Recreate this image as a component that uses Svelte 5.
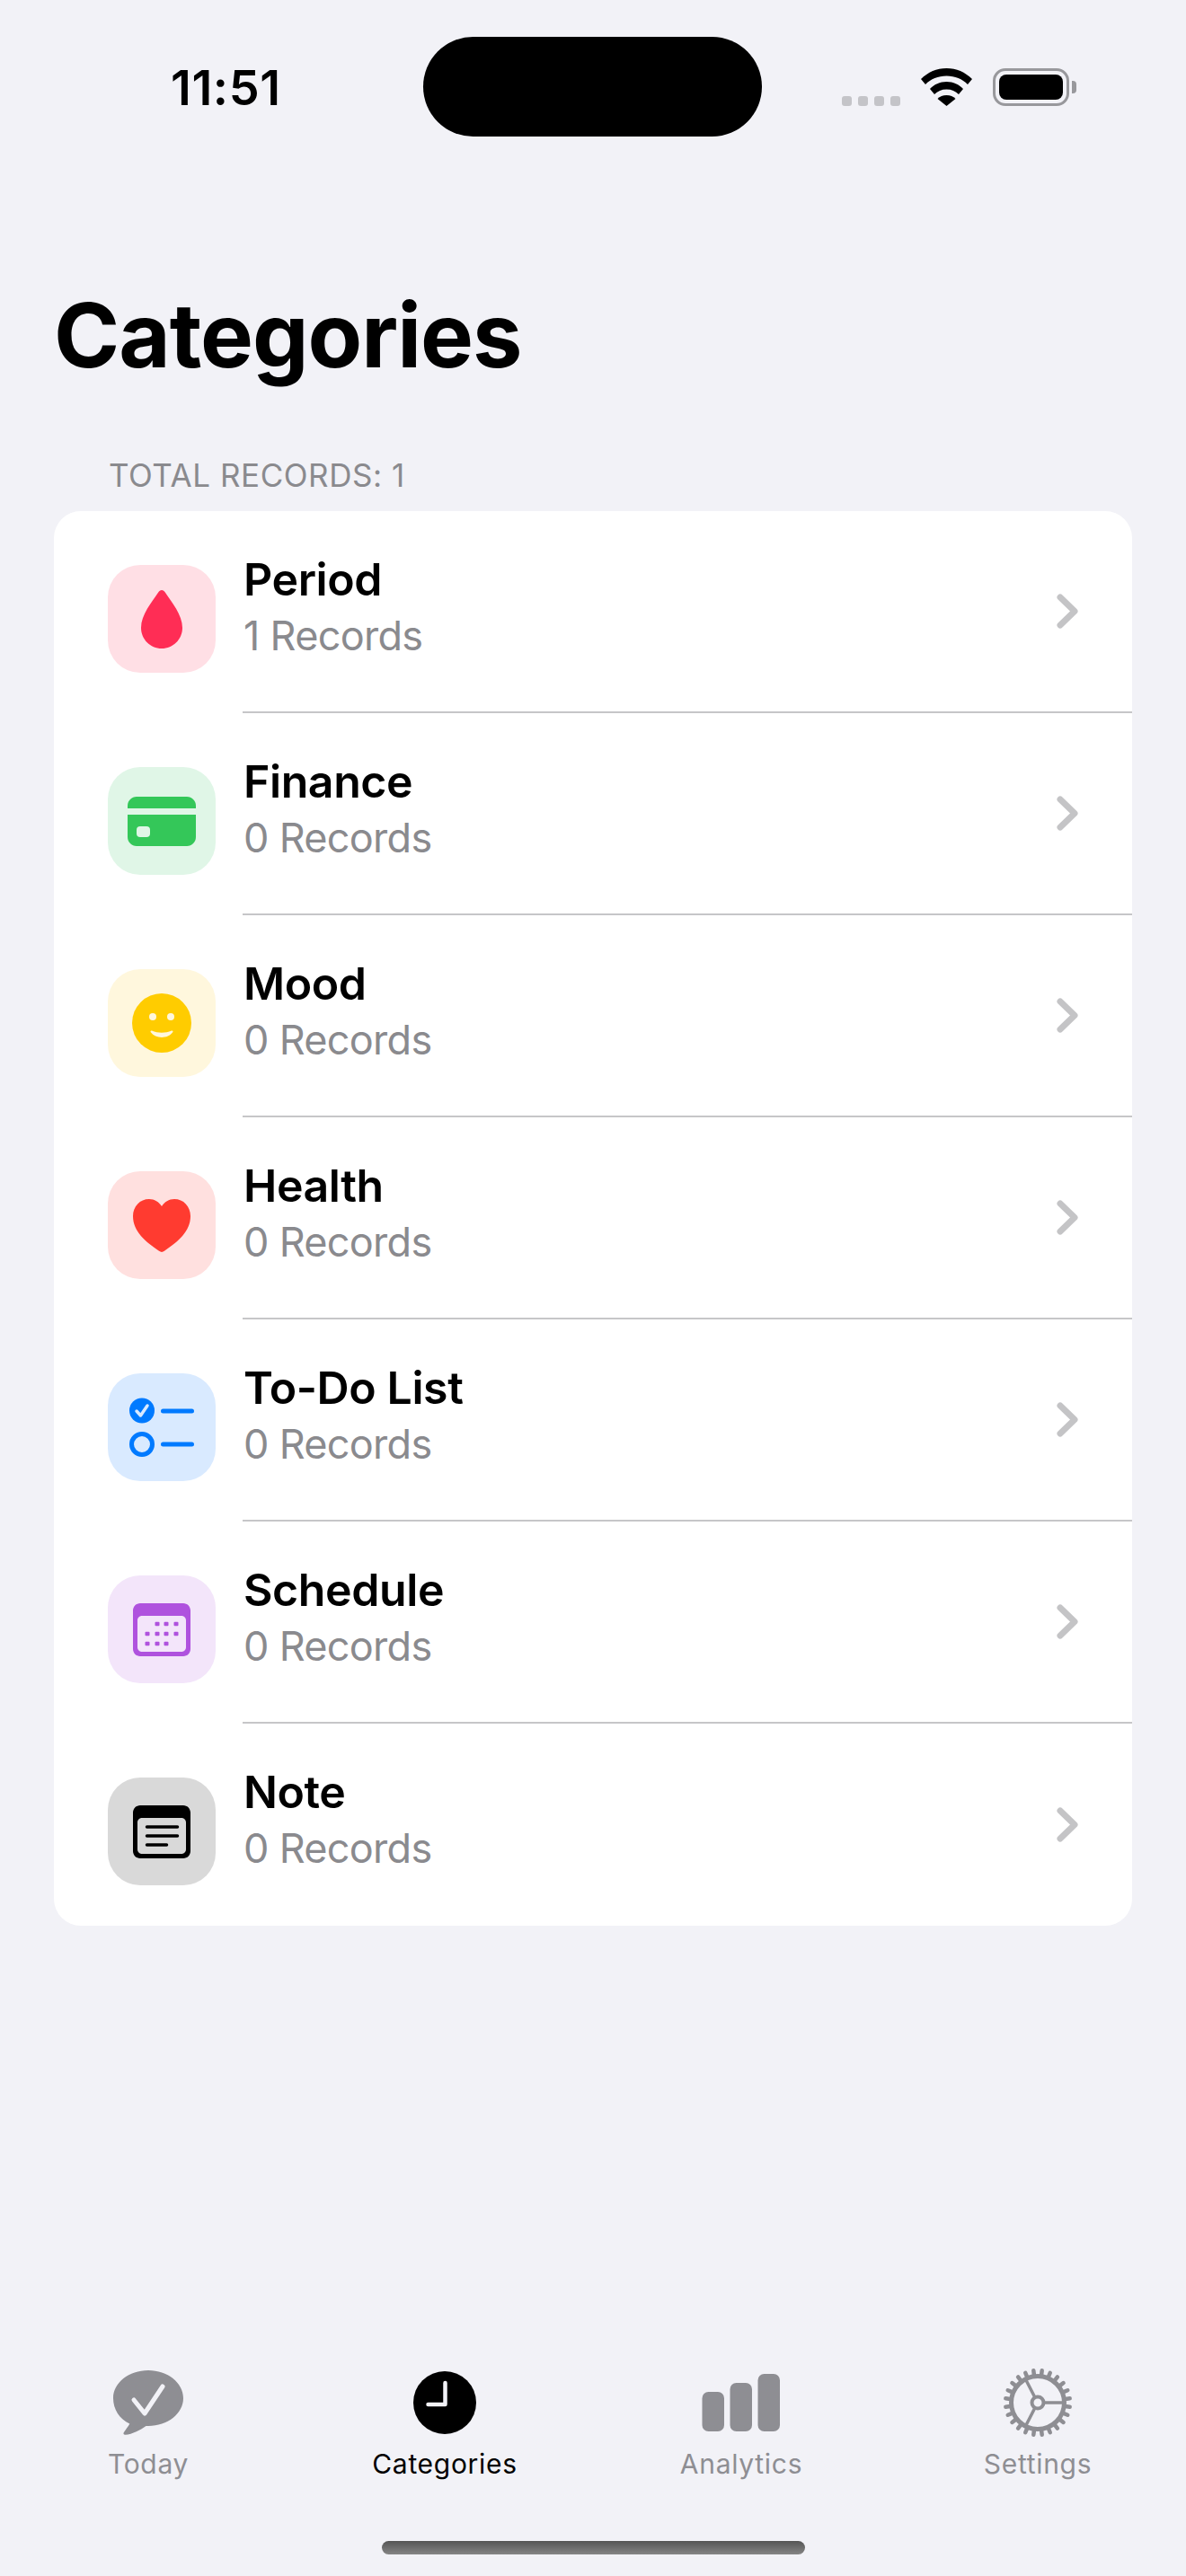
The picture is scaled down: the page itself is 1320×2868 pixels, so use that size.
<script>
  const categories = [
    { id: 'period', name: 'Period', count: 1 },
    { id: 'finance', name: 'Finance', count: 0 },
    { id: 'mood', name: 'Mood', count: 0 },
    { id: 'health', name: 'Health', count: 0 },
    { id: 'todo', name: 'To-Do List', count: 0 },
    { id: 'schedule', name: 'Schedule', count: 0 },
    { id: 'note', name: 'Note', count: 0 }
  ];

  const tabs = [
    { id: 'today', label: 'Today' },
    { id: 'categories', label: 'Categories', active: true },
    { id: 'analytics', label: 'Analytics' },
    { id: 'settings', label: 'Settings' }
  ];

  const calendarDots = [
    [55, 54], [65, 54], [76, 54],
    [44, 65], [55, 65], [65, 65], [76, 65],
    [44, 76], [55, 76], [65, 76]
  ];

  // gear teeth, 24 round the rim
  const teeth = Array.from({ length: 24 }, (_, i) => {
    const a = ((i + 0.5) * Math.PI) / 12;
    return {
      x1: 40 + Math.cos(a) * 31,
      y1: 40 + Math.sin(a) * 31,
      x2: 40 + Math.cos(a) * 36,
      y2: 40 + Math.sin(a) * 36
    };
  });
</script>

{#snippet tileIcon(id)}
  <svg viewBox="0 0 120 120" width="120" height="120">
    {#if id === 'period'}
      <path fill="#ff2d55" d="M60 28c1.600 0 2.800.9 3.800 2.400C71 41.500 83 55 83 70c0 12.700-10.300 23-23 23S37 82.700 37 70c0-15 12-28.500 19.200-39.600C57.200 28.900 58.400 28 60 28Z" />
    {:else if id === 'finance'}
      <path fill="#34c759" d="M22 46v-3c0-5.500 4.500-10 10-10h56c5.500 0 10 4.500 10 10v3Z" />
      <path fill="#34c759" d="M22 53h76v25c0 5.500-4.500 10-10 10H32c-5.500 0-10-4.500-10-10Z" />
      <rect x="32" y="66" width="15" height="12" rx="4" fill="#e0f6e7" />
    {:else if id === 'mood'}
      <circle cx="60" cy="60" r="33" fill="#ffcc00" />
      <circle cx="50" cy="53" r="4" fill="#fff7dd" />
      <circle cx="70" cy="53" r="4" fill="#fff7dd" />
      <path fill="#fff7dd" d="M49 68.500c7 3 15 3 22 0 1.300-.5 2 .8 1.200 1.800C69.500 74 65 76 60 76s-9.500-2-12.200-5.700c-.8-1 0-2.300 1.200-1.800Z" />
    {:else if id === 'health'}
      <path fill="#ff3b30" d="M60 90c-1 0-2-.5-3-1.200C42 78.500 28 67 28 50c0-11 7.800-19 18-19 6 0 10.800 3 14 8 3.200-5 8-8 14-8 10.200 0 18 8 18 19 0 17-14 28.500-29 38.800-1 .7-2 1.200-3 1.200Z" />
    {:else if id === 'todo'}
      <circle cx="38" cy="41.500" r="14" fill="#007aff" />
      <path fill="none" stroke="#d9eaff" stroke-width="3.500" stroke-linecap="round" stroke-linejoin="round" d="M32 42l4.500 5L44 36" />
      <circle cx="38" cy="79" r="11.500" fill="none" stroke="#007aff" stroke-width="5" />
      <path stroke="#007aff" stroke-width="5" stroke-linecap="round" d="M61.500 42h32M61.500 79h32" />
    {:else if id === 'schedule'}
      <path fill="#af52de" fill-rule="evenodd" d="M36 31h48c4.400 0 8 3.600 8 8v43c0 4.400-3.600 8-8 8H36c-4.400 0-8-3.600-8-8V39c0-4.400 3.600-8 8-8Zm2 14c-2.800 0-5 2.200-5 5v30c0 2.800 2.200 5 5 5h44c2.800 0 5-2.200 5-5V50c0-2.800-2.200-5-5-5Z" />
      {#each calendarDots as [x, y]}
        <rect x={x - 2.500} y={y - 2.200} width="5" height="4.400" rx="1" fill="#af52de" />
      {/each}
    {:else}
      <path fill="#000" fill-rule="evenodd" d="M36 31h48c4.400 0 8 3.600 8 8v43c0 4.400-3.600 8-8 8H36c-4.400 0-8-3.600-8-8V39c0-4.400 3.600-8 8-8Zm2 14c-2.800 0-5 2.200-5 5v30c0 2.800 2.200 5 5 5h44c2.800 0 5-2.200 5-5V50c0-2.800-2.200-5-5-5Z" />
      <path stroke="#000" stroke-width="3.500" stroke-linecap="round" d="M43.500 55h34M43.500 65h34M43.500 75h22" />
    {/if}
  </svg>
{/snippet}

{#snippet tabIcon(id)}
  {#if id === 'today'}
    <svg viewBox="0 0 80 74" width="80" height="74">
      <path fill="#8e8e93" d="M40 1c21.500 0 39 13.800 39 31S61.500 63 40 63h-2.500C32 67 22 72.500 14.500 72.800c-2 .1-2.600-1.400-1.600-2.800 2-2.700 4.600-6.300 6.400-9.400C8 55.200 1 44.500 1 32 1 14.800 18.500 1 40 1Z" />
      <path fill="none" stroke="#f2f2f7" stroke-width="5" stroke-linecap="round" stroke-linejoin="round" d="M24 34l12 15L56 19" />
    </svg>
  {:else if id === 'categories'}
    <svg viewBox="0 0 72 72" width="72" height="72">
      <circle cx="36" cy="36" r="35" fill="#000" />
      <path fill="none" stroke="#f2f2f7" stroke-width="4.500" stroke-linecap="round" stroke-linejoin="round" d="M36.500 14v24H17.500" />
    </svg>
  {:else if id === 'analytics'}
    <svg viewBox="0 0 88 64" width="88" height="64">
      <rect x="0.500" y="20" width="24.500" height="44" rx="7" fill="#8e8e93" />
      <rect x="31.500" y="10" width="24.500" height="54" rx="7" fill="#8e8e93" />
      <rect x="62.500" y="0" width="24.500" height="64" rx="7" fill="#8e8e93" />
    </svg>
  {:else}
    <svg viewBox="0 0 80 80" width="80" height="80" fill="none" stroke="#8e8e93">
      {#each teeth as t}
        <line x1={t.x1} y1={t.y1} x2={t.x2} y2={t.y2} stroke-width="4.500" stroke-linecap="round" />
      {/each}
      <circle cx="40" cy="40" r="29.500" stroke-width="5" />
      <circle cx="40" cy="40" r="6.500" stroke-width="4" />
      <path stroke-width="3.500" d="M47 40h22M36.500 33.500L26 13M36.500 46.500L26 67" />
    </svg>
  {/if}
{/snippet}

<div class="screen">
  <header class="status">
    <span class="time">11:51</span>
    <div class="island"></div>
    <div class="indicators">
      <div class="signal">
        <i></i><i></i><i></i><i></i>
      </div>
      <svg class="wifi" viewBox="0 0 57 42" width="57" height="42">
        <path d="M28.500 0C17.500 0 7.800 4.300 0 12l5 6C11 12 19 8.500 28.500 8.500S46 12 52 18l5-6C49.200 4.300 39.500 0 28.500 0Z" />
        <path d="M28.500 15C21 15 14.500 18 10 23l5 6c3.500-3.500 8-5.500 13.500-5.500S38.500 25.500 42 29l5-6c-4.500-5-11-8-18.500-8Z" />
        <path d="M28.500 30c-4.200 0-7.500 1.500-10 4l10 8 10-8c-2.500-2.500-5.800-4-10-4Z" />
      </svg>
      <div class="battery">
        <div class="battery-body"><div class="battery-fill"></div></div>
        <div class="battery-nub"></div>
      </div>
    </div>
  </header>

  <main class="content">
    <h1>Categories</h1>
    <div class="section-label">TOTAL RECORDS: 1</div>
    <ul class="list">
      {#each categories as c}
        <li class="row">
          <div class={`tile ${c.id}`}>
            {@render tileIcon(c.id)}
          </div>
          <div class="row-main">
            <div class="row-text">
              <div class="row-title">{c.name}</div>
              <div class="row-sub">{c.count} Records</div>
            </div>
            <svg class="chevron" viewBox="0 0 24 40" width="24" height="40">
              <path d="M4 4l16 15.500L4 35" />
            </svg>
          </div>
        </li>
      {/each}
    </ul>
  </main>

  <nav class="tabbar">
    {#each tabs as t}
      <div class="tab" class:active={t.active}>
        <div class="tab-icon">{@render tabIcon(t.id)}</div>
        <span>{t.label}</span>
      </div>
    {/each}
  </nav>
  <div class="home-wrap"><div class="home-bar"></div></div>
</div>

<style>
  :global(body) {
    margin: 0;
    background: #f2f2f7;
  }

  .screen {
    width: 1320px;
    height: 2868px;
    display: flex;
    flex-direction: column;
    background: #f2f2f7;
    font-family: Inter, "Liberation Sans", sans-serif;
    color: #000;
    overflow: hidden;
  }

  .status {
    display: grid;
    grid-template-columns: 471px 377px 1fr;
    align-items: center;
    height: 111px;
    margin-top: 41px;
  }

  .time {
    padding-left: 190px;
    font-size: 54px;
    font-weight: 600;
    letter-spacing: 0.6px;
    line-height: 1;
    position: relative;
    top: 1px;
  }

  .island {
    height: 111px;
    border-radius: 56px;
    background: #000;
  }

  .indicators {
    display: flex;
    align-items: flex-end;
    height: 42px;
    padding-left: 89px;
  }

  .signal {
    display: flex;
    gap: 7px;
    margin-right: 23px;
  }

  .signal i {
    width: 11px;
    height: 11px;
    border-radius: 3px;
    background: #c4c4c8;
  }

  .wifi {
    fill: #000;
    margin-right: 23px;
  }

  .battery {
    display: flex;
    align-items: center;
    height: 42px;
    gap: 3px;
  }

  .battery-body {
    box-sizing: border-box;
    width: 85px;
    height: 42px;
    padding: 4px;
    border: 3px solid #98989c;
    border-radius: 14px;
  }

  .battery-fill {
    width: 100%;
    height: 100%;
    border-radius: 8px;
    background: #000;
  }

  .battery-nub {
    width: 5px;
    height: 14px;
    border-radius: 0 4px 4px 0;
    background: #98989c;
  }

  .content {
    padding: 0 60px;
    flex: 1;
  }

  h1 {
    margin: 164px 0 0;
    font-size: 99px;
    font-weight: 700;
    line-height: 114px;
    letter-spacing: -1px;
  }

  .section-label {
    margin: 77px 0 0 61px;
    font-size: 35px;
    line-height: 44px;
    color: #8a8a8e;
    letter-spacing: 0.55px;
  }

  .list {
    list-style: none;
    margin: 18px 0 0;
    padding: 0;
    background: #fff;
    border-radius: 30px;
  }

  .row {
    display: flex;
    height: 225px;
    padding-left: 60px;
  }

  .tile {
    flex: none;
    width: 120px;
    height: 120px;
    margin-top: 60px;
    border-radius: 36px;
  }

  .tile svg {
    display: block;
  }

  .tile.period { background: #ffdfe5; }
  .tile.finance { background: #e0f6e7; }
  .tile.mood { background: #fff7dd; }
  .tile.health { background: #ffe0df; }
  .tile.todo { background: #d9eaff; }
  .tile.schedule { background: #f3e5fa; }
  .tile.note { background: #d9d9d9; }

  .row-main {
    flex: 1;
    display: flex;
    align-items: center;
    justify-content: space-between;
    margin-left: 30px;
    padding-right: 60px;
    border-bottom: 2px solid #c6c6c8;
  }

  .row:last-child .row-main {
    border-bottom: 0;
  }

  .row-text {
    margin-left: 1px;
    align-self: flex-start;
    padding-top: 45px;
  }

  .row-title {
    font-size: 50px;
    font-weight: 600;
    line-height: 62px;
    letter-spacing: -0.4px;
  }

  .row-sub {
    font-size: 45px;
    line-height: 62px;
    margin-top: 1px;
    letter-spacing: -0.7px;
    color: #8a8a8e;
  }

  .chevron {
    fill: none;
    stroke: #c4c4c6;
    stroke-width: 7;
    stroke-linecap: round;
    stroke-linejoin: round;
  }

  .tabbar {
    display: grid;
    grid-template-columns: repeat(4, 330px);
    height: 198px;
  }

  .tab {
    display: flex;
    flex-direction: column;
    align-items: center;
    color: #8e8e93;
    font-size: 30px;
    font-weight: 400;
    line-height: 36px;
    letter-spacing: 0.7px;
  }

  .tab.active {
    color: #000;
  }

  .tab span {
    margin-top: 6px;
  }

  .tab-icon {
    height: 88px;
    display: flex;
    align-items: center;
    justify-content: center;
  }

  .tab-icon svg {
    display: block;
  }

  .home-wrap {
    display: flex;
    justify-content: center;
    padding: 0 0 24px;
  }

  .home-bar {
    width: 471px;
    height: 15px;
    border-radius: 8px;
    background: linear-gradient(180deg, #555 0%, #858585 100%);
  }
</style>
